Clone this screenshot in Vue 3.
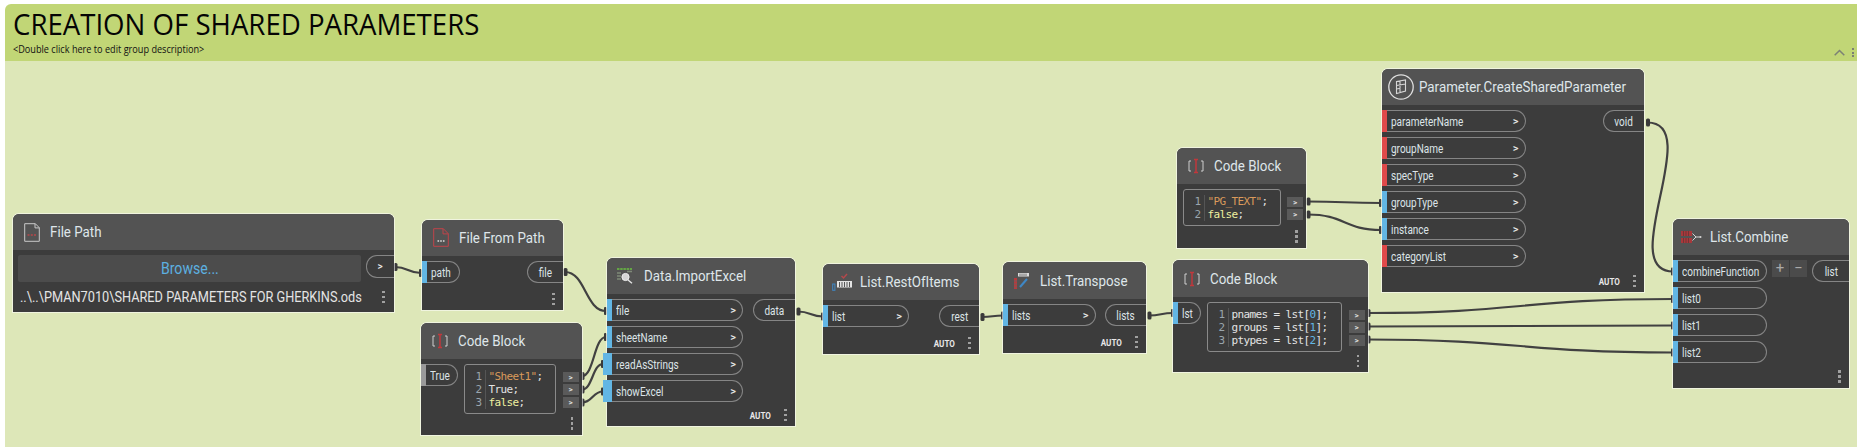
<script setup>
const red = "#e04a4a";
const blue = "#62b6e4";

const nodes = [
  { title: "File From Path", icon: "fileRed", x: 422, y: 219.5, w: 141, h: 90.5, headH: 36.5,
    inputs: [{ name: "path", w: 38 }], outputs: [{ name: "file", w: 36 }], dots: true },
  { title: "Data.ImportExcel", icon: "excel", x: 607, y: 258, w: 188, h: 168, headH: 36, auto: true,
    inputs: [
      { name: "file", w: 136, arrow: true },
      { name: "sheetName", w: 136, arrow: true },
      { name: "readAsStrings", w: 136, arrow: true, wide: true },
      { name: "showExcel", w: 136, arrow: true, wide: true },
    ],
    outputs: [{ name: "data", w: 42 }] },
  { title: "List.RestOfItems", icon: "rest", x: 823, y: 264, w: 156, h: 90, headH: 36, auto: true,
    inputs: [{ name: "list", w: 86, arrow: true }], outputs: [{ name: "rest", w: 40 }] },
  { title: "List.Transpose", icon: "transpose", x: 1003, y: 262, w: 143, h: 91, headH: 37, auto: true,
    inputs: [{ name: "lists", w: 92.5, arrow: true }], outputs: [{ name: "lists", w: 41 }] },
  { title: "Parameter.CreateSharedParameter", icon: "param", x: 1382, y: 68.5, w: 262, h: 223.5, headH: 36.5, auto: true,
    inputs: [
      { name: "parameterName", w: 143.5, arrow: true, req: true },
      { name: "groupName", w: 143.5, arrow: true, req: true },
      { name: "specType", w: 143.5, arrow: true, req: true },
      { name: "groupType", w: 143.5, arrow: true },
      { name: "instance", w: 143.5, arrow: true },
      { name: "categoryList", w: 143.5, arrow: true, req: true },
    ],
    outputs: [{ name: "void", w: 41 }] },
  { title: "List.Combine", icon: "combine", x: 1673, y: 219, w: 176, h: 168.5, headH: 36, plusMinus: true, dots: true,
    inputs: [
      { name: "combineFunction", w: 94 },
      { name: "list0", w: 94 },
      { name: "list1", w: 94 },
      { name: "list2", w: 94 },
    ],
    outputs: [{ name: "list", w: 37 }] },
];

const codeBlocks = [
  { x: 421, y: 323, w: 160.5, h: 111.5, headH: 36, boxW: 92, input: { name: "True", w: 37, grey: true },
    lines: [
      [{ t: '"Sheet1"', c: "str" }, { t: ";" }],
      [{ t: "True;" }],
      [{ t: "false", c: "bool" }, { t: ";" }],
    ] },
  { x: 1177, y: 148, w: 129, h: 99.5, headH: 36, boxW: 98,
    lines: [
      [{ t: '"PG_TEXT"', c: "str" }, { t: ";" }],
      [{ t: "false", c: "bool" }, { t: ";" }],
    ] },
  { x: 1173, y: 260, w: 194.5, h: 112, headH: 37, boxW: 135, input: { name: "lst", w: 28 },
    lines: [
      [{ t: "pnames = lst[" }, { t: "0", c: "num" }, { t: "];" }],
      [{ t: "groups = lst[" }, { t: "1", c: "num" }, { t: "];" }],
      [{ t: "ptypes = lst[" }, { t: "2", c: "num" }, { t: "];" }],
    ] },
];

const wires = [
  [395, 267, 421, 273],
  [565, 272, 606, 311],
  [582, 376, 606, 337],
  [582, 389.5, 603, 364],
  [582, 402.5, 603, 391.5],
  [798, 311.5, 823, 316.5],
  [982, 317, 1003, 315.5],
  [1149, 315.5, 1173, 313],
  [1308, 201.5, 1381, 203],
  [1308, 214.5, 1381, 230],
  [1368, 313, 1673, 299],
  [1368, 326.5, 1673, 325.5],
  [1368, 339.5, 1673, 352.5],
].map(([x1, y1, x2, y2]) => {
  const m = (x1 + x2) / 2;
  return { x1, y1, x2, y2, d: `M${x1} ${y1} C${m} ${y1} ${m} ${y2} ${x2} ${y2}` };
});
const voidWire = { x1: 1647.5, y1: 122.5, x2: 1673, y2: 271.5, d: "M1647.5 122.5 C1705 122.5 1615 271.5 1673 271.5" };
const allWires = [...wires, voidWire];

const barColor = (p) => (p.grey ? "#9a9a9a" : p.req ? red : blue);
</script>

<template>
  <div class="page">
    <div class="group">
      <div class="group-head">
        <div class="group-title"><span>CREATION OF SHARED PARAMETERS</span></div>
        <div class="group-desc"><span>&lt;Double click here to edit group description&gt;</span></div>
        <div class="group-tools">
          <svg width="11" height="7" viewBox="0 0 11 7"><path d="M.7 6.3 5.5 1.5l4.8 4.8" fill="none" stroke="#7c8175" stroke-width="1.5" /></svg>
          <div class="dots small"><i></i><i></i><i></i></div>
        </div>
      </div>
      <div class="group-body"></div>
    </div>

    <div class="canvas">
      <svg class="wires" width="1858" height="448" viewBox="0 0 1858 448">
        <g v-for="(w, i) in allWires" :key="i">
          <path :d="w.d" fill="none" stroke="#414141" stroke-width="2.2" />
          <rect :x="w.x1 - 1.5" :y="w.y1 - 4" width="4" height="8" rx="1.5" fill="#3a3a3a" />
          <rect :x="w.x2 - 2" :y="w.y2 - 4" width="2.5" height="8" rx="1" fill="#3a3a3a" />
        </g>
      </svg>

      <!-- File Path -->
      <div class="node" style="left: 13px; top: 214px; width: 380.5px; height: 98px">
        <div class="head" style="height: 36px">
          <div class="head-icon">
            <svg width="16" height="19" viewBox="0 0 16 19">
              <path d="M.7.7h10.6l4 4v13.6H.7z M11 .7v4.2h4.3" fill="none" stroke="#c9c9c9" stroke-width="1" />
              <path d="M3.5 12h2M6.8 12h2M10 12h2" stroke="#b8474a" stroke-width="1.4" />
            </svg>
          </div>
          <span class="title">File Path</span>
        </div>
        <div class="fp-top">
          <div class="browse"><span>Browse...</span></div>
          <div class="port out fp-out"><span class="arrow tiny">&gt;</span></div>
        </div>
        <div class="fp-path">
          <span class="fp-text">..\..\PMAN7010\SHARED PARAMETERS FOR GHERKINS.ods</span>
          <div class="dots"><i></i><i></i><i></i></div>
        </div>
      </div>

      <!-- Code blocks -->
      <div v-for="(c, i) in codeBlocks" :key="'c' + i" class="node"
        :style="{ left: c.x + 'px', top: c.y + 'px', width: c.w + 'px', height: c.h + 'px' }">
        <div class="head" :style="{ height: c.headH + 'px' }">
          <div class="head-icon">
            <svg width="16" height="16" viewBox="0 0 16 16">
              <path d="M3 3H1v10h2M13 3h2v10h-2" fill="none" stroke="#cfcfcf" stroke-width="1" />
              <path d="M6 1.5h4M6 14.5h4M8 1.5v13" fill="none" stroke="#c0383c" stroke-width="1.5" />
            </svg>
          </div>
          <span class="title">Code Block</span>
        </div>
        <div class="body cb-body">
          <div v-if="c.input" class="port in" :style="{ width: c.input.w + 'px' }">
            <b class="bar" :style="{ background: barColor(c.input) }"></b>
            <span class="lbl">{{ c.input.name }}</span>
          </div>
          <div class="code" :style="{ width: c.boxW + 'px' }">
            <div class="nums"><div v-for="(l, n) in c.lines" :key="n">{{ n + 1 }}</div></div>
            <div class="src">
              <div v-for="(l, n) in c.lines" :key="n" class="src-line"><span v-for="(s, k) in l" :key="k" :class="s.c">{{ s.t }}</span></div>
            </div>
          </div>
          <div class="cb-outs">
            <div v-for="(l, n) in c.lines" :key="n" class="cb-btn">&gt;</div>
          </div>
        </div>
        <div class="foot"><div class="dots"><i></i><i></i><i></i></div></div>
      </div>

      <!-- Regular nodes -->
      <div v-for="n in nodes" :key="n.title" class="node"
        :style="{ left: n.x + 'px', top: n.y + 'px', width: n.w + 'px', height: n.h + 'px' }">
        <div class="head" :style="{ height: n.headH + 'px' }">
          <div class="head-icon">
            <svg v-if="n.icon === 'fileRed'" width="16" height="19" viewBox="0 0 16 19">
              <path d="M.7.7h9.6l5 5v12.6H.7z M10 .7v5.2h5.3" fill="none" stroke="#c0444a" stroke-width="1" />
              <path d="M4.5 13h1.6M7.2 13h1.6M9.9 13h1.6" stroke="#dcdcdc" stroke-width="1.6" />
            </svg>
            <svg v-else-if="n.icon === 'excel'" width="17" height="16" viewBox="0 0 17 16">
              <path d="M0 1h15" stroke="#64a545" stroke-width="2" stroke-dasharray="2.5 .7" />
              <path d="M0 5h4M0 8h4M0 11h4M10 3.5h5" stroke="#7f8a78" stroke-width="1.3" />
              <circle cx="8.5" cy="9" r="3.6" fill="#d6d6d6" stroke="#efefef" stroke-width="1" />
              <path d="M11 12l4 3.3" stroke="#e6e6e6" stroke-width="1.4" />
            </svg>
            <svg v-else-if="n.icon === 'rest'" width="20" height="18" viewBox="0 0 20 18">
              <path d="M9.5 3l2 2 3.5-4" fill="none" stroke="#b4484b" stroke-width="1.5" />
              <rect x="5" y="8" width="15" height="6.5" fill="#e3e3e3" />
              <path d="M7.5 9v5M10 9v5M12.5 9v5M15 9v5M17.5 9v5" stroke="#555" stroke-width="1" />
              <rect x=".7" y="11" width="2.2" height="6.3" fill="none" stroke="#3f87c5" stroke-width="1" />
            </svg>
            <svg v-else-if="n.icon === 'transpose'" width="16" height="16" viewBox="0 0 16 16">
              <rect x="4" y="0" width="11" height="3.5" fill="#dcdcdc" />
              <path d="M6 .5v2.5M8 .5v2.5M10 .5v2.5M12 .5v2.5" stroke="#555" stroke-width=".8" />
              <rect x="0" y="5" width="3" height="11" fill="#b8393c" />
              <path d="M0 8h3M0 11h3M0 14h3" stroke="#666" stroke-width=".8" />
              <path d="M6 14 13 6" stroke="#3f87c5" stroke-width="2" />
            </svg>
            <svg v-else-if="n.icon === 'param'" width="26" height="26" viewBox="0 0 26 26">
              <circle cx="13" cy="13" r="12.2" fill="none" stroke="#dedede" stroke-width="1.3" />
              <path d="M8.5 7.5 17.5 6v11l-9 2.5zM8.5 7.5v12M12 7v11.5M8.5 11.5l9-1.5M8.5 15l4-.8" fill="none" stroke="#d6d6d6" stroke-width="1.1" />
            </svg>
            <svg v-else-if="n.icon === 'combine'" width="21" height="12" viewBox="0 0 21 12">
              <g fill="#a8383b">
                <rect x="0" y="0" width="11" height="5" />
                <rect x="0" y="7" width="11" height="5" />
              </g>
              <path d="M2.5 0v5M5 0v5M7.5 0v5M2.5 7v5M5 7v5M7.5 7v5" stroke="#5a3333" stroke-width=".7" />
              <path d="M11.5 2.5 15 6l-3.5 3.5M15 6h4" fill="none" stroke="#d6d6d6" stroke-width="1" />
              <circle cx="19.5" cy="6" r="1" fill="#d6d6d6" />
            </svg>
          </div>
          <span class="title">{{ n.title }}</span>
        </div>
        <div class="body">
          <div class="col">
            <div v-for="p in n.inputs" :key="p.name" class="port in" :class="{ arrowed: p.arrow }" :style="{ width: p.w + 'px' }">
              <b class="bar" :class="{ wide: p.wide }" :style="{ background: barColor(p) }"></b>
              <span class="lbl">{{ p.name }}</span>
              <span v-if="p.arrow" class="arrow">&gt;</span>
            </div>
          </div>
          <div class="right">
            <div v-if="n.plusMinus" class="pm">
              <div class="pm-btn">+</div>
              <div class="pm-btn">−</div>
            </div>
            <div v-for="p in n.outputs" :key="p.name" class="port out" :style="{ width: p.w + 'px' }">
              <span class="lbl mid">{{ p.name }}</span>
            </div>
          </div>
        </div>
        <div class="foot">
          <span v-if="n.auto" class="auto">AUTO</span>
          <div class="dots"><i></i><i></i><i></i></div>
        </div>
      </div>
    </div>
  </div>
</template>

<style>
html,
body {
  margin: 0;
  background: #fff;
}
</style>

<style scoped>
.page {
  position: relative;
  width: 1858px;
  height: 448px;
  overflow: hidden;
  background: #fff;
  font-family: Roboto, "Liberation Sans", sans-serif;
  display: flex;
  flex-direction: column;
  box-sizing: border-box;
  padding: 4px 1px 1px 5px;
}
.group {
  flex: 1;
  display: flex;
  flex-direction: column;
  border-radius: 6px 0 0 0;
  overflow: hidden;
}
.group-head {
  position: relative;
  height: 57px;
  background: #c1d676;
  padding-left: 8px;
  box-sizing: border-box;
}
.group-title {
  font-family: "Open Sans", sans-serif;
  font-size: 30px;
  line-height: 36px;
  padding-top: 2px;
  color: #050505;
  white-space: nowrap;
}
.group-title span {
  display: inline-block;
  transform: scaleX(0.92);
  transform-origin: left;
}
.group-desc {
  font-family: "Open Sans", sans-serif;
  font-size: 10.5px;
  line-height: 13px;
  padding-top: 1px;
  color: #111;
  white-space: nowrap;
}
.group-desc span {
  display: inline-block;
  transform: scaleX(0.87);
  transform-origin: left;
}
.group-tools {
  position: absolute;
  right: 3px;
  bottom: 4px;
  display: flex;
  align-items: center;
  gap: 7px;
}
.group-body {
  flex: 1;
  background: #dde7b8;
}
.canvas {
  position: absolute;
  inset: 0;
}
.wires {
  position: absolute;
  left: 0;
  top: 0;
}
.node {
  position: absolute;
  display: flex;
  flex-direction: column;
  background: #3c3c3c;
  border-radius: 6px 6px 0 0;
  box-shadow: 0 0 0 1px rgba(255, 255, 255, 0.55);
  color: #dde4e8;
}
.head {
  display: flex;
  align-items: center;
  flex: none;
  background: #535353;
  border-radius: 6px 6px 0 0;
}
.head-icon {
  width: 37px;
  flex: none;
  display: flex;
  justify-content: center;
  align-items: center;
}
.title {
  display: inline-block;
  font-size: 15px;
  white-space: nowrap;
  color: #dfe6ea;
  transform: scaleX(0.89);
  transform-origin: left;
}
.body {
  display: flex;
  justify-content: space-between;
  flex: 1;
  padding-top: 5px;
  min-height: 0;
}
.col {
  display: flex;
  flex-direction: column;
  gap: 4.6px;
}
.right {
  display: flex;
  align-items: flex-start;
  gap: 5px;
}
.port {
  position: relative;
  height: 22.4px;
  box-sizing: border-box;
  border: 1px solid #858585;
  display: flex;
  align-items: center;
  font-size: 12.5px;
  flex: none;
  white-space: nowrap;
}
.port.in {
  border-left: none;
  border-radius: 0 11px 11px 0;
  padding-left: 9px;
}
.port.arrowed {
  justify-content: space-between;
  padding-right: 6px;
}
.port.out {
  border-right: none;
  border-radius: 11px 0 0 11px;
  justify-content: center;
}
.bar {
  position: absolute;
  left: 0;
  top: -1px;
  bottom: -1px;
  width: 4.5px;
}
.bar.wide {
  left: -4px;
  width: 8.5px;
}
.lbl {
  display: inline-block;
  transform: scaleX(0.8);
  transform-origin: left;
}
.lbl.mid {
  transform-origin: center;
}
.arrow {
  font-size: 11px;
  font-weight: 500;
  color: #e8e8e8;
}
.arrow.tiny {
  font-size: 10px;
}
.foot {
  flex: none;
  height: 22px;
  display: flex;
  justify-content: flex-end;
  align-items: center;
  padding-right: 8.5px;
  gap: 13px;
}
.auto {
  font-size: 9.5px;
  font-weight: 700;
  color: #e8e8e8;
  display: inline-block;
  transform: scaleX(0.85);
  transform-origin: right;
}
.dots {
  display: flex;
  flex-direction: column;
  gap: 2.5px;
  flex: none;
}
.dots i {
  display: block;
  width: 2.5px;
  height: 2.5px;
  background: #a0a0a0;
}
.dots.small {
  gap: 1.5px;
}
.dots.small i {
  width: 2px;
  height: 2px;
  background: #7c8175;
}
.fp-top {
  display: flex;
  justify-content: space-between;
  align-items: flex-start;
  padding: 5px 0 0 5px;
}
.browse {
  width: 343px;
  height: 27px;
  background: #4c4c4c;
  border-radius: 2px;
  display: flex;
  align-items: center;
  justify-content: center;
  color: #5cb0e0;
  font-size: 16px;
}
.browse span {
  display: inline-block;
  transform: scaleX(0.88);
}
.fp-out {
  width: 28px;
  height: 23px;
}
.fp-path {
  display: flex;
  justify-content: space-between;
  align-items: center;
  flex: 1;
  padding: 0 9px 0 7px;
}
.fp-text {
  flex: 1;
  width: 0;
  font-size: 14px;
  white-space: nowrap;
  display: inline-block;
  transform: scaleX(0.91);
  transform-origin: left;
  color: #e4e4e4;
}
.cb-body {
  justify-content: flex-start;
  align-items: flex-start;
  padding-right: 3px;
}
.code {
  display: flex;
  align-self: flex-start;
  box-sizing: border-box;
  border: 1px solid #8a8a8a;
  border-radius: 3px;
  padding: 5px 0 4px;
  margin-left: 5.5px;
  font-family: "DejaVu Sans Mono", "Liberation Mono", monospace;
  font-size: 11px;
  letter-spacing: -0.62px;
  line-height: 13px;
  flex: none;
}
.nums {
  width: 21px;
  box-sizing: border-box;
  padding-right: 3px;
  text-align: right;
  color: #9aa5ad;
  border-right: 1px solid #555;
  flex: none;
}
.src {
  padding-left: 3px;
  white-space: nowrap;
  color: #e3e3e3;
}
.src-line {
  height: 13px;
}
.str {
  color: #d99a5b;
}
.bool {
  color: #eef0a0;
}
.num {
  color: #62b6e4;
}
.cb-outs {
  margin-left: auto;
  padding-top: 7.5px;
  display: flex;
  flex-direction: column;
  gap: 2.6px;
}
.cb-btn {
  width: 16px;
  height: 10.4px;
  background: #5a5a5a;
  color: #dcdcdc;
  font-size: 8px;
  font-weight: 700;
  line-height: 11px;
  text-align: center;
}
.pm {
  display: flex;
  gap: 1.5px;
}
.pm-btn {
  width: 17px;
  height: 17px;
  background: #4b4b4b;
  color: #a9a9a9;
  font-size: 15px;
  line-height: 16px;
  text-align: center;
}
</style>
